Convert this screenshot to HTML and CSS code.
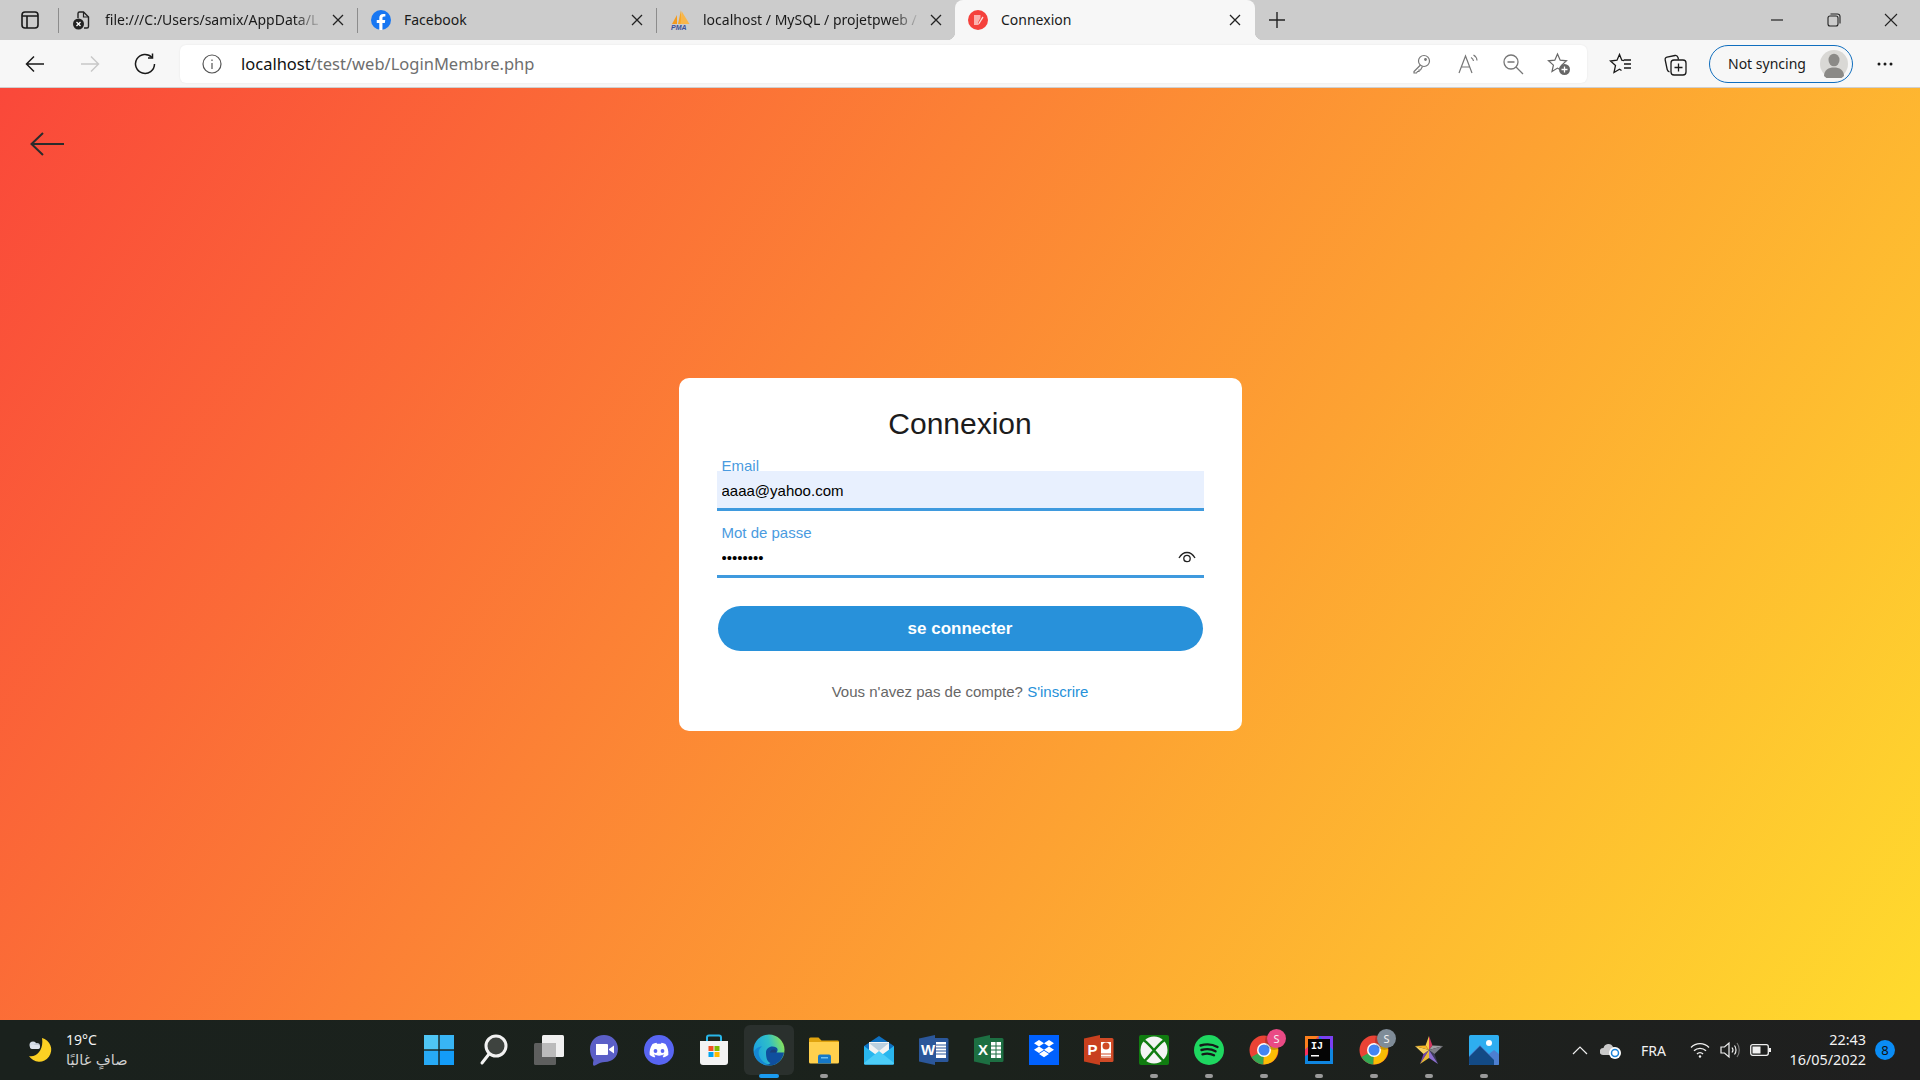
FILE: index.html
```html
<!DOCTYPE html>
<html lang="fr">
  <head>
    <meta charset="UTF-8" />
    <title>Connexion</title>
    <link rel="stylesheet" href="styles.css">
  </head>
  <body>
    <div class="tabstrip">
      <div class="sidebar-btn">
        <svg width="18" height="18" viewBox="0 0 18 18" fill="none" stroke="#1a1a1a" stroke-width="1.6"><rect x="1" y="1" width="16" height="16" rx="3"/><path d="M6 5v12M1 5h16" /></svg>
      </div>
      <div class="tab sep">
        <svg class="favicon" width="20" height="20" viewBox="0 0 20 20" fill="none"><path d="M6 8V3.500A1.500 1.500 0 0 1 7.500 2h4l5 5v9.500a1.500 1.500 0 0 1-1.500 1.500h-3" stroke="#222" stroke-width="1.400"/><path d="M11.500 2v5h5" stroke="#222" stroke-width="1.200"/><circle cx="6.500" cy="14" r="5.500" fill="#222"/><path d="M4.500 12l4 4M8.500 12l-4 4" stroke="#fff" stroke-width="1.300"/></svg>
        <span class="tab-title fade">file:///C:/Users/samix/AppData/L</span>
        <svg class="tab-close" width="12" height="12" viewBox="0 0 12 12" stroke="#222" stroke-width="1.300"><path d="M1 1l10 10M11 1L1 11"/></svg>
      </div>
      <div class="tab sep">
        <svg class="favicon" width="20" height="20" viewBox="0 0 20 20"><circle cx="10" cy="10" r="10" fill="#1877f2"/><path d="M13.800 12.900l.45-2.900h-2.800V8.100c0-.8.4-1.550 1.650-1.550h1.250V4.100s-1.150-.2-2.250-.2c-2.300 0-3.800 1.400-3.800 3.900V10H5.750v2.900H8.300V20h3.150v-7.100z" fill="#fff"/></svg>
        <span class="tab-title">Facebook</span>
        <svg class="tab-close" width="12" height="12" viewBox="0 0 12 12" stroke="#222" stroke-width="1.300"><path d="M1 1l10 10M11 1L1 11"/></svg>
      </div>
      <div class="tab sep">
        <svg class="favicon" width="20" height="20" viewBox="-1 0 20 20"><path d="M10 0l-3 14h3z" fill="#f6a623"/><path d="M10.500 1L9.500 14h9z" fill="#f8b64a"/><path d="M6 5L1 14h5z" fill="#f39a1e"/><text x="0" y="19.500" class="pma-text">PMA</text></svg>
        <span class="tab-title fade">localhost / MySQL / projetpweb /</span>
        <svg class="tab-close" width="12" height="12" viewBox="0 0 12 12" stroke="#222" stroke-width="1.300"><path d="M1 1l10 10M11 1L1 11"/></svg>
      </div>
      <div class="tab active">
        <svg class="favicon" width="20" height="20" viewBox="0 0 20 20"><circle cx="10" cy="10" r="10" fill="#f5413c"/><path d="M6 5h6.500v3L10 12.500V15H6z" fill="#fbb0ac"/><path d="M14.500 6.500L10.500 13l-.5 2 1.500-1.200 4-6.300z" fill="#fde0de"/></svg>
        <span class="tab-title">Connexion</span>
        <svg class="tab-close" width="12" height="12" viewBox="0 0 12 12" stroke="#222" stroke-width="1.300"><path d="M1 1l10 10M11 1L1 11"/></svg>
      </div>
      <div class="new-tab">
        <svg width="18" height="18" viewBox="0 0 18 18" stroke="#222" stroke-width="1.400"><path d="M9 1v16M1 9h16"/></svg>
      </div>
      <div class="win-controls">
        <svg width="14" height="14" viewBox="0 0 14 14" stroke="#222" stroke-width="1.200"><path d="M1 7h12"/></svg>
        <svg width="14" height="14" viewBox="0 0 14 14" fill="none" stroke="#222" stroke-width="1.100"><rect x="1" y="3" width="10" height="10" rx="2"/><path d="M3.500 1h7A2.500 2.500 0 0 1 13 3.500v7"/></svg>
        <svg width="14" height="14" viewBox="0 0 14 14" stroke="#222" stroke-width="1.100"><path d="M1 1l12 12M13 1L1 13"/></svg>
      </div>
    </div>

    <div class="toolbar">
      <div class="nav-btn">
        <svg width="20" height="20" viewBox="0 0 20 20" fill="none" stroke="#1a1a1a" stroke-width="1.500"><path d="M19 10H1.500M9 2.500L1.500 10 9 17.500"/></svg>
      </div>
      <div class="nav-btn">
        <svg width="20" height="20" viewBox="0 0 20 20" fill="none" stroke="#c8c8c8" stroke-width="1.500"><path d="M1 10h17.500M11 2.500l7.500 7.500-7.500 7.500"/></svg>
      </div>
      <div class="nav-btn">
        <svg width="22" height="22" viewBox="0 0 22 22" fill="none" stroke="#1a1a1a" stroke-width="1.500"><path d="M18 4.500A9.500 9.500 0 1 0 20.500 11"/><path d="M18.500 0.500V5h-4.500"/></svg>
      </div>
      <div class="address-bar">
        <svg class="info-icon" width="20" height="20" viewBox="0 0 20 20" fill="none" stroke="#555" stroke-width="1.200"><circle cx="10" cy="10" r="9"/><path d="M10 9v6M10 5.500v1.500"/></svg>
        <span class="url"><span class="url-host">localhost</span>/test/web/LoginMembre.php</span>
        <div class="address-icons">
          <svg width="22" height="22" viewBox="0 0 22 22" fill="none" stroke="#777" stroke-width="1.200"><circle cx="14" cy="8" r="5.500"/><path d="M10.500 12L4 18.500V20h2.500l1-1.500h1.500V17h1.500l2-3.500"/><circle cx="15.500" cy="6.500" r=".8" fill="#777"/></svg>
          <svg class="read-aloud" width="24" height="22" viewBox="0 0 24 22" fill="none" stroke="#777" stroke-width="1.200"><path d="M2 20L8.500 3 15 20M4.500 14h8"/><path d="M14 4.500c1.500.8 2.300 2 2.500 3.500M16.500 2c2.200 1.200 3.300 3 3.500 5.500"/></svg>
          <svg width="22" height="22" viewBox="0 0 22 22" fill="none" stroke="#777" stroke-width="1.300"><circle cx="9" cy="9" r="7"/><path d="M14 14l7 7M5.500 9h7"/></svg>
          <svg width="24" height="24" viewBox="0 0 24 24" fill="none"><path d="M10.500 2l2.700 6.200 6.300.6-4.800 4.300 1.400 6.400-5.600-3.400L5 19.500l1.400-6.400L1.500 8.800l6.300-.6z" stroke="#666" stroke-width="1.200"/><circle cx="17.500" cy="17.500" r="5.500" fill="#666"/><path d="M17.500 14.500v6M14.500 17.500h6" stroke="#fff" stroke-width="1.300"/></svg>
        </div>
      </div>
      <div class="tool-icons">
        <svg width="24" height="24" viewBox="0 0 24 24" fill="none" stroke="#1a1a1a" stroke-width="1.300"><path d="M15 8.500l-2.200-.3L10.500 2.500 8 8.200 1.500 9l5 4.500-1.500 7 5.500-3.200 2 1.200M15 8h7M15 12h7M15 16h7"/></svg>
        <svg width="26" height="26" viewBox="0 0 26 26" fill="none" stroke="#1a1a1a" stroke-width="1.300"><rect x="9" y="9" width="15" height="15" rx="3"/><path d="M16.500 12.500v8M12.500 16.500h8"/><path d="M7.500 21c-1.200-.4-2-1.200-2.300-2.500L3.200 9c-.3-1.400.4-2.500 1.800-2.800l8-1.700c1.500-.3 2.500.5 3 2l.5 2"/></svg>
        <div class="profile-pill">
          <span class="pill-label">Not syncing</span>
          <svg class="avatar" width="28" height="28" viewBox="0 0 28 28"><circle cx="14" cy="14" r="14" fill="#d9d8d5"/><ellipse cx="14" cy="10" rx="5.500" ry="6.300" fill="#8b8a87"/><path d="M4 26c0-6 4.500-8.500 10-8.500S24 20 24 26a14 14 0 0 1-20 0z" fill="#8b8a87"/></svg>
        </div>
        <svg class="more-icon" width="18" height="6" viewBox="0 0 18 6" fill="#1a1a1a"><circle cx="3" cy="3" r="1.500"/><circle cx="9" cy="3" r="1.500"/><circle cx="15" cy="3" r="1.500"/></svg>
      </div>
    </div>

    <main class="page">
      <a class="back-link" href="#">
        <svg width="36" height="28" viewBox="0 0 36 28" fill="none" stroke="#2b2b2b" stroke-width="2"><path d="M35 14H2M14 3L2.500 14 14 25"/></svg>
      </a>
      <form class="login-card">
        <h1>Connexion</h1>
        <div class="field email-field">
          <label for="email">Email</label>
          <input id="email" type="text" value="aaaa@yahoo.com" />
        </div>
        <div class="field password-field">
          <label for="password">Mot de passe</label>
          <input id="password" type="password" value="aaaaaaaa" />
          <svg class="eye" width="18" height="14" viewBox="0 0 18 14" fill="none" stroke="#222" stroke-width="1.300"><path d="M1 8c2-3.500 5-5.500 8-5.500S15 4.500 17 8"/><circle cx="9" cy="8.500" r="3.200"/></svg>
        </div>
        <button type="button" class="submit-btn">se connecter</button>
        <p class="signup">Vous n'avez pas de compte? <a href="#">S'inscrire</a></p>
      </form>
    </main>

    <footer class="taskbar">
      <div class="weather">
        <svg width="28" height="28" viewBox="0 0 28 28"><path d="M16 2a12 12 0 1 1-13 18c7 2 15-6 13-18z" fill="#fbd023"/><circle cx="7" cy="9" r="3.500" fill="#d5dde6"/><circle cx="11" cy="10" r="3" fill="#c3ccd6"/><rect x="4" y="9" width="10" height="4" rx="2" fill="#dfe5ec"/></svg>
        <div class="weather-text">
          <span>19°C</span>
          <span class="weather-desc">صافٍ غالبًا</span>
        </div>
      </div>

      <div class="task-icons">
        <div class="task-item">
          <svg width="30" height="30" viewBox="0 0 30 30"><rect width="14.300" height="14.300" fill="#4fc6f5"/><rect x="15.700" width="14.300" height="14.300" fill="#38b5f5"/><rect y="15.700" width="14.300" height="14.300" fill="#27aaf6"/><rect x="15.700" y="15.700" width="14.300" height="14.300" fill="#139cf8"/></svg>
        </div>
        <div class="task-item">
          <svg width="30" height="32" viewBox="0 0 30 32" fill="#3e433f" stroke="#f2f2f2" stroke-width="3"><circle cx="17" cy="12" r="10"/><path d="M10 20L3 29" stroke-linecap="round" fill="none"/></svg>
        </div>
        <div class="task-item">
          <svg width="32" height="32" viewBox="0 0 32 32"><rect x="9" y="1" width="22" height="22" rx="1.500" fill="#f0f0f0"/><rect x="1" y="9" width="22" height="22" rx="1.500" fill="#666" fill-opacity=".9"/><rect x="9" y="9" width="14" height="14" fill="#bbb"/></svg>
        </div>
        <div class="task-item">
          <svg width="30" height="32" viewBox="0 0 30 32"><path d="M15 1c8 0 14 6 14 14s-6 13-13 13c-3 0-6 1-9 3-2 1-3 1-3-1 0-1 .3-3 .5-4C2 23 1 19 1 15 1 7 7 1 15 1z" fill="#5b5fc7"/><path d="M7 10h11a1 1 0 0 1 1 1v9a1 1 0 0 1-1 1H7z" fill="#fff"/><path d="M20 15l5-3.500v8L20 16z" fill="#fff"/></svg>
        </div>
        <div class="task-item">
          <svg width="30" height="30" viewBox="0 0 30 30"><circle cx="15" cy="15" r="15" fill="#5865f2"/><path d="M21.500 9c-1.300-.6-2.600-1-4-1.200l-.5 1c-1.400-.2-2.700-.2-4 0l-.5-1c-1.400.2-2.700.6-4 1.200-2.500 3.700-3.200 7.400-2.800 11 1.600 1.200 3.200 1.900 4.800 2.400l1-1.700c-.6-.2-1.100-.5-1.600-.8l.4-.3c3.100 1.400 6.400 1.400 9.400 0l.4.3c-.5.300-1 .6-1.600.8l1 1.700c1.600-.5 3.200-1.200 4.800-2.400.4-4.200-.7-7.800-2.800-11z" fill="#fff"/><ellipse cx="11.500" cy="16" rx="1.900" ry="2.100" fill="#5865f2"/><ellipse cx="18.500" cy="16" rx="1.900" ry="2.100" fill="#5865f2"/></svg>
        </div>
        <div class="task-item">
          <svg width="30" height="32" viewBox="0 0 30 32"><path d="M8 7V3.500A2 2 0 0 1 10 1.500h10A2 2 0 0 1 22 3.500V7" fill="none" stroke="#29b6e8" stroke-width="2"/><path d="M1 7h28v21a3 3 0 0 1-3 3H4a3 3 0 0 1-3-3z" fill="#f3f3f3"/><rect x="9.500" y="12" width="5" height="5" fill="#f25022"/><rect x="15.500" y="12" width="5" height="5" fill="#7fba00"/><rect x="9.500" y="18" width="5" height="5" fill="#00a4ef"/><rect x="15.500" y="18" width="5" height="5" fill="#ffb900"/></svg>
        </div>
        <div class="task-item active-app">
          <svg width="32" height="32" viewBox="0 0 32 32">
            <defs>
              <linearGradient id="edgeTop" x1="0" y1=".6" x2="1" y2=".3"><stop offset="0" stop-color="#1a9fe2"/><stop offset=".55" stop-color="#2fbfc8"/><stop offset="1" stop-color="#8de455"/></linearGradient>
            </defs>
            <circle cx="16" cy="16" r="15.500" fill="url(#edgeTop)"/>
            <path d="M1 18c1-3 4-5.500 8-5.500-3 2-4 5-3 9 1.200 4 5 8 11 9.500-8 .5-15.500-5-16-13z" fill="#1587d4"/>
            <path d="M13 18.500c0-3.500 3-6 6.500-6 2.500 0 4.500 1 5 2.500.5 2-1 3.500-1 3.500H31c-1 6.500-6.500 13-14.500 13-1.500 0-3-.2-4-.5 2 0 4-1 5-2-3-1-4.500-4.500-4.500-10.500z" fill="#0f4f9e"/>
            <path d="M17 19c0-2 1.500-3.500 3.500-3.500 1.500 0 2.500.6 3 1.500-.5.800-.6 1.200-.5 1.500h-5.500z" fill="#1a3f7a"/>
          </svg>
          <i class="run-dot wide"></i>
        </div>
        <div class="task-item">
          <svg width="32" height="28" viewBox="0 0 32 28"><path d="M1 3a1.500 1.500 0 0 1 1.500-1.500h8l3 3H30a1.500 1.500 0 0 1 1 1.500v3H1z" fill="#e0a30e"/><path d="M1 6h30v20a1.500 1.500 0 0 1-1.500 1.500h-27A1.500 1.500 0 0 1 1 26z" fill="#ffd04d"/><path d="M10 27.500v-7a2 2 0 0 1 2-2h9a2 2 0 0 1 2 2v7z" fill="#1678c8"/><rect x="13" y="21" width="7" height="1.500" fill="#6fc0f0"/></svg>
          <i class="run-dot"></i>
        </div>
        <div class="task-item">
          <svg width="32" height="30" viewBox="0 0 32 30"><path d="M1 11L16 1l15 10v17a1.500 1.500 0 0 1-1.500 1.500h-27A1.500 1.500 0 0 1 1 28z" fill="#0e70c0"/><path d="M6 7h20v12L16 24 6 19z" fill="#f3f3f3"/><path d="M6 8h20l-10 8z" fill="#bcd0df"/><path d="M1 11l15 11 15-11v17a1.500 1.500 0 0 1-1.500 1.500h-27A1.500 1.500 0 0 1 1 28z" fill="#29b6ee"/><path d="M1 28L16 16l15 12v.500a1 1 0 0 1-1 1H2a1 1 0 0 1-1-1z" fill="#4ccdf8"/></svg>
        </div>
        <div class="task-item">
          <svg width="32" height="30" viewBox="0 0 32 30"><path d="M9 3h20a1.500 1.500 0 0 1 1.500 1.500v21A1.500 1.500 0 0 1 29 27H9z" fill="#2b579a"/><path d="M18 7h10v16H18z" fill="#fff"/><path d="M18 10h10M18 13h10M18 16h10M18 19h10" stroke="#2b579a"/><path d="M1 3.500L17 0v30L1 26.500z" fill="#2b579a"/><text x="3" y="20" class="app-letter">W</text></svg>
        </div>
        <div class="task-item">
          <svg width="32" height="30" viewBox="0 0 32 30"><path d="M9 3h20a1.500 1.500 0 0 1 1.500 1.500v21A1.500 1.500 0 0 1 29 27H9z" fill="#1d6f42"/><path d="M18 7h10v16H18z" fill="#fff"/><path d="M18 11h10M18 15h10M18 19h10M23 7v16" stroke="#1d6f42"/><path d="M1 3.500L17 0v30L1 26.500z" fill="#1d6f42"/><text x="5" y="20" class="app-letter">X</text></svg>
        </div>
        <div class="task-item">
          <svg width="30" height="30" viewBox="0 0 30 30"><rect width="30" height="30" fill="#0061fe"/><path d="M10 5l5 3.200-5 3.200-5-3.200zM20 5l5 3.200-5 3.200-5-3.200zM10 11.500l5 3.200-5 3.200-5-3.200zM20 11.500l5 3.200-5 3.200-5-3.200zM10 19l5-3.200 5 3.200-5 3.300z" fill="#fff"/></svg>
        </div>
        <div class="task-item">
          <svg width="32" height="30" viewBox="0 0 32 30"><path d="M9 3h20a1.500 1.500 0 0 1 1.500 1.500v21A1.500 1.500 0 0 1 29 27H9z" fill="#d04a26"/><path d="M18 7h10v16H18z" fill="#fff"/><path d="M18 19h10M18 22h10" stroke="#d04a26"/><circle cx="23" cy="11" r="3.500" fill="#d04a26"/><path d="M1 3.500L17 0v30L1 26.500z" fill="#c8401e"/><text x="4.500" y="20" class="app-letter">P</text></svg>
        </div>
        <div class="task-item">
          <svg width="30" height="30" viewBox="0 0 30 30"><rect width="30" height="30" rx="2" fill="#107c10"/><circle cx="15" cy="15" r="13.500" fill="#f4f4f4"/><path d="M5 5.500C11 9 19 21 24.500 26M25 5.500C19 9 11 21 5.500 26" fill="none" stroke="#107c10" stroke-width="2.600"/></svg>
          <i class="run-dot"></i>
        </div>
        <div class="task-item">
          <svg width="30" height="30" viewBox="0 0 30 30"><circle cx="15" cy="15" r="15" fill="#1ed760"/><path d="M6.500 10.500c6-1.800 12-1.300 17 1.500M7.500 15c5-1.400 10-1 14 1.300M8.500 19.300c4-1.100 8-.8 11.500 1" fill="none" stroke="#15191a" stroke-width="2.400" stroke-linecap="round"/></svg>
          <i class="run-dot"></i>
        </div>
        <div class="task-item">
          <svg width="30" height="30" viewBox="0 0 30 30"><circle cx="15" cy="15" r="14.500" fill="#ea4335"/><path d="M15 15L2.500 22a14.500 14.500 0 0 0 12 7.500z" fill="#34a853"/><path d="M15 15l12.500-6.500A14.500 14.500 0 0 1 14.500 29.500z" fill="#fbbc04"/><circle cx="15" cy="15" r="7" fill="#fff"/><circle cx="15" cy="15" r="5.500" fill="#4285f4"/></svg>
          <span class="profile-badge pink">S</span>
          <i class="run-dot"></i>
        </div>
        <div class="task-item">
          <svg width="28" height="28" viewBox="0 0 28 28"><rect width="28" height="28" fill="#1086e0"/><path d="M0 0h14L0 14z" fill="#fc801d"/><path d="M0 14L14 0l-2 14-12 6z" fill="#fe315d"/><path d="M14 0h14v14z" fill="#7b3ff2"/><rect x="3" y="3" width="22" height="22" fill="#050505"/><text x="6" y="13" class="ij-letter">IJ</text><rect x="6" y="19" width="8" height="1.500" fill="#fff"/></svg>
          <i class="run-dot"></i>
        </div>
        <div class="task-item">
          <svg width="30" height="30" viewBox="0 0 30 30"><circle cx="15" cy="15" r="14.500" fill="#ea4335"/><path d="M15 15L2.500 22a14.500 14.500 0 0 0 12 7.500z" fill="#34a853"/><path d="M15 15l12.500-6.500A14.500 14.500 0 0 1 14.500 29.500z" fill="#fbbc04"/><circle cx="15" cy="15" r="7" fill="#fff"/><circle cx="15" cy="15" r="5.500" fill="#4285f4"/></svg>
          <span class="profile-badge slate">S</span>
          <i class="run-dot"></i>
        </div>
        <div class="task-item">
          <svg width="30" height="30" viewBox="0 0 30 30"><path d="M15 1l-3.500 9.500L15 15z" fill="#f7c948"/><path d="M15 1l3.500 9.500L15 15z" fill="#d1365f"/><path d="M1 11l10.500-.5L15 15z" fill="#f9b624"/><path d="M29 11l-10.500-.5L15 15z" fill="#a0a0a5"/><path d="M6 29l3.500-10L15 15z" fill="#7345b5"/><path d="M24 29l-3.500-10L15 15z" fill="#3c3c5a"/><path d="M1 11l8.500 8L15 15z" fill="#f5d061"/><path d="M29 11l-8.500 8L15 15z" fill="#7f7f88"/><path d="M6 29l9-6v-8z" fill="#e8b93a"/><path d="M24 29l-9-6v-8z" fill="#8d6fd1"/></svg>
          <i class="run-dot"></i>
        </div>
        <div class="task-item">
          <svg width="30" height="30" viewBox="0 0 30 30"><rect width="30" height="30" rx="1.500" fill="#2eaef0"/><circle cx="20" cy="8" r="3" fill="#fff"/><path d="M0 21L11 10l9 9 5-4 5 4v9.500a1.500 1.500 0 0 1-1.500 1.500h-27A1.500 1.500 0 0 1 0 28.500z" fill="#4d7fd1"/><path d="M0 22l11-11 14 14v5H1.500A1.500 1.500 0 0 1 0 28.500z" fill="#134a85"/></svg>
          <i class="run-dot"></i>
        </div>
      </div>

      <div class="tray">
        <svg class="tray-chevron" width="16" height="9" viewBox="0 0 16 9" fill="none" stroke="#eee" stroke-width="1.200"><path d="M1 8l7-7 7 7"/></svg>
        <svg class="tray-cloud" width="22" height="18" viewBox="0 0 22 18"><path d="M3 14a3.500 3.500 0 0 1 .5-7A5 5 0 0 1 13 6a3 3 0 0 1 3 3H14v5z" fill="#c9c9c9"/><circle cx="15" cy="12" r="6" fill="#fff"/><circle cx="15" cy="12" r="3.500" fill="none" stroke="#1a82d8" stroke-width="1.500"/></svg>
        <span class="tray-lang">FRA</span>
        <svg class="tray-wifi" width="20" height="16" viewBox="0 0 20 16" fill="none" stroke="#f0f0f0" stroke-width="1.300"><path d="M1 5.500a12.500 12.500 0 0 1 18 0M4 8.800a8.500 8.500 0 0 1 12 0M7 12a4 4 0 0 1 6 0"/><circle cx="10" cy="14.500" r="1.200" fill="#f0f0f0" stroke="none"/></svg>
        <svg class="tray-volume" width="20" height="18" viewBox="0 0 20 18" fill="none" stroke="#f0f0f0" stroke-width="1.200"><path d="M1 6h3.500L9 2v14l-4.500-4H1z"/><path d="M12 6.500c1.200 1.500 1.200 3.500 0 5M14.500 4.500c2 2.500 2 6.500 0 9"/><path d="M17 2c3 4 3 10 0 14" stroke="#777"/></svg>
        <svg class="tray-battery" width="21" height="12" viewBox="0 0 21 12"><rect x=".7" y=".7" width="17.600" height="10.600" rx="2" fill="none" stroke="#f0f0f0" stroke-width="1.300"/><rect x="2.500" y="2.500" width="8" height="7" fill="#f0f0f0"/><rect x="19" y="4" width="2" height="4" fill="#f0f0f0"/></svg>
        <div class="tray-clock">
          <span>22:43</span>
          <span>16/05/2022</span>
        </div>
        <span class="notif-badge">8</span>
      </div>
    </footer>
  </body>
</html>
```

FILE: styles.css
```css
* {
  box-sizing: border-box;
}
body {
  margin: 0;
  display: flex;
  flex-direction: column;
  height: 1080px;
  overflow: hidden;
  font-family: "Noto Sans", sans-serif;
  color: #1a1a1a;
}
svg {
  display: block;
  flex-shrink: 0;
}

/* browser chrome */
.tabstrip {
  display: flex;
  align-items: stretch;
  height: 40px;
  background-color: #cccccc;
}
.sidebar-btn {
  display: flex;
  align-items: center;
  justify-content: center;
  width: 59px;
}
.tab {
  position: relative;
  display: flex;
  align-items: center;
  width: 299px;
  padding: 0 14px 0 13px;
  font-size: 14px;
}
.tab.sep::before {
  content: "";
  position: absolute;
  left: -1px;
  top: 8px;
  height: 25px;
  width: 1px;
  background-color: #8c8c8c;
}
.tab.active {
  width: 300px;
  margin-left: -1px;
  background-color: #f7f7f7;
  border-radius: 8px 8px 0 0;
}
.tab.active::before,
.tab.active::after {
  content: "";
  position: absolute;
  bottom: 0;
  width: 8px;
  height: 8px;
}
.tab.active::before {
  left: -8px;
  background: radial-gradient(circle at 0 0, #cccccc 8px, #f7f7f7 8.5px);
}
.tab.active::after {
  right: -8px;
  background: radial-gradient(circle at 100% 0, #cccccc 8px, #f7f7f7 8.5px);
}
.favicon {
  margin-right: 13px;
}
.tab-title {
  flex: 1;
  overflow: hidden;
  white-space: nowrap;
  padding-bottom: 2px;
}
.tab-title.fade {
  -webkit-mask-image: linear-gradient(to right, #000 86%, transparent 99%);
  mask-image: linear-gradient(to right, #000 86%, transparent 99%);
}
.tab-close {
  margin-left: 7px;
}
.new-tab {
  display: flex;
  align-items: center;
  padding-left: 13px;
}
.win-controls {
  display: flex;
  align-items: center;
  gap: 43px;
  margin-left: auto;
  padding-right: 22px;
}

.toolbar {
  display: flex;
  align-items: center;
  height: 48px;
  padding: 1px 0 0 7px;
  background-color: #f7f7f7;
  border-bottom: 1px solid #cfcfcf;
}
.nav-btn {
  display: flex;
  align-items: center;
  justify-content: center;
  width: 55px;
}
.address-bar {
  display: flex;
  align-items: center;
  width: 1407px;
  height: 38px;
  margin-left: 8px;
  padding: 0 16px 0 22px;
  background-color: #ffffff;
  border-radius: 6px;
  box-shadow: 0 0 2px rgba(0, 0, 0, 0.08);
}
.info-icon {
  margin-right: 19px;
}
.url {
  padding-bottom: 2px;
  font-size: 16.500px;
  color: #6e6e6e;
}
.url-host {
  color: #111111;
}
.address-icons {
  display: flex;
  align-items: center;
  gap: 23px;
  margin-left: auto;
}
.read-aloud {
  margin: 0 -2px 0 2px;
}
.tool-icons {
  display: flex;
  align-items: center;
  margin-left: 22px;
}
.tool-icons > svg:nth-child(2) {
  margin-left: 29px;
}
.profile-pill {
  display: flex;
  align-items: center;
  justify-content: space-between;
  width: 144px;
  height: 38px;
  margin-left: 21px;
  padding: 0 4px 0 18px;
  font-size: 14px;
  border: 1.500px solid #106ebe;
  border-radius: 19px;
}
.pill-label {
  padding-bottom: 2px;
}
.more-icon {
  margin-left: 23px;
}

/* page */
.page {
  position: relative;
  flex: 1;
  display: flex;
  align-items: center;
  justify-content: center;
  background: linear-gradient(125deg, #fa483a, #ffdb2d);
  font-family: "Liberation Sans", Arial, sans-serif;
}
.back-link {
  position: absolute;
  left: 29px;
  top: 42px;
}
.login-card {
  width: 563px;
  height: 353px;
  padding: 28px 38px 0;
  background-color: white;
  border-radius: 10px;
  text-align: center;
}
h1 {
  margin: 0;
  font-size: 30px;
  font-weight: 400;
  line-height: 36px;
  color: #1c1c1c;
}
.field {
  position: relative;
  height: 67px;
  text-align: left;
}
.email-field {
  margin-top: 14px;
}
.field label {
  display: block;
  height: 15px;
  padding-left: 5px;
  font-size: 15px;
  line-height: 20px;
  color: #4a9be0;
}
.field input {
  display: block;
  width: 100%;
  height: 40px;
  padding: 3px 5px 0;
  font-family: inherit;
  font-size: 15px;
  color: #000;
  background: transparent;
  border: none;
  border-bottom: 3px solid #3f9ade;
  border-radius: 0;
  outline: none;
}
.email-field input {
  background-color: #e8f0fe;
}
.eye {
  position: absolute;
  right: 8px;
  top: 27px;
}
.submit-btn {
  display: block;
  width: 485px;
  height: 45px;
  margin: 16px auto 0;
  padding-top: 2px;
  font-family: inherit;
  font-size: 17px;
  font-weight: 700;
  color: #ffffff;
  background-color: #2891da;
  border: none;
  border-radius: 25px;
}
.signup {
  margin: 32px 0 0;
  font-size: 15px;
  color: #666666;
}
.signup a {
  color: #2691d9;
  text-decoration: none;
}

/* taskbar */
.taskbar {
  position: relative;
  display: grid;
  grid-template-columns: 1fr auto 1fr;
  align-items: center;
  height: 60px;
  color: #f2f2f2;
  background: linear-gradient(to right, #1a211d, #1b221c 50%, #1f1f1f);
}
.weather {
  display: flex;
  align-items: center;
  gap: 12px;
  padding-left: 26px;
}
.weather-text {
  display: flex;
  flex-direction: column;
  font-size: 14px;
  line-height: 20px;
}
.weather-desc {
  color: #cfcfcf;
  font-family: "DejaVu Sans", sans-serif;
  font-size: 14.500px;
}
.task-icons {
  display: flex;
  height: 100%;
  margin: 0 -1px 0 1px;
}
.task-item {
  position: relative;
  display: flex;
  align-items: center;
  justify-content: center;
  width: 55px;
  height: 100%;
}
.active-app::before {
  content: "";
  position: absolute;
  left: 3px;
  top: 5px;
  width: 50px;
  height: 50px;
  background-color: #2a302d;
  border-radius: 6px;
}
.active-app svg {
  position: relative;
}
.run-dot {
  position: absolute;
  left: 50%;
  bottom: 2px;
  width: 8px;
  height: 4px;
  margin-left: -4px;
  background-color: #9a9a9a;
  border-radius: 2px;
}
.run-dot.wide {
  width: 20px;
  margin-left: -10px;
  background-color: #1a9bf0;
}
.profile-badge {
  position: absolute;
  left: 31px;
  top: 9px;
  width: 19px;
  height: 19px;
  font-size: 11px;
  line-height: 19px;
  text-align: center;
  border-radius: 50%;
  box-shadow: -2px 2px 0 rgba(0, 0, 0, 0.2);
}
.profile-badge.pink {
  background-color: #ea4a85;
}
.profile-badge.slate {
  background-color: #7f8c98;
}
.pma-text {
  font-family: "Liberation Sans", sans-serif;
  font-size: 7px;
  font-weight: 700;
  font-style: italic;
  fill: #3a4f9a;
}
.app-letter {
  font-family: "Liberation Sans", sans-serif;
  font-size: 15px;
  font-weight: 700;
  fill: #ffffff;
}
.ij-letter {
  font-family: "Liberation Mono", monospace;
  font-size: 10px;
  font-weight: 700;
  fill: #ffffff;
}
.tray {
  display: flex;
  align-items: center;
  justify-content: flex-end;
  font-size: 14px;
}
.tray-cloud {
  margin-left: 12px;
}
.tray-lang {
  margin-left: 19px;
}
.tray-wifi {
  margin-left: 24px;
}
.tray-volume {
  margin-left: 10px;
}
.tray-battery {
  margin-left: 10px;
}
.tray-clock {
  display: flex;
  flex-direction: column;
  align-items: flex-end;
  width: 95px;
  font-size: 14.400px;
  line-height: 20px;
}
.notif-badge {
  width: 20px;
  height: 20px;
  margin: 0 25px 0 9px;
  font-size: 13px;
  line-height: 20px;
  text-align: center;
  color: #111;
  background-color: #0a8cf5;
  border-radius: 50%;
}
```
